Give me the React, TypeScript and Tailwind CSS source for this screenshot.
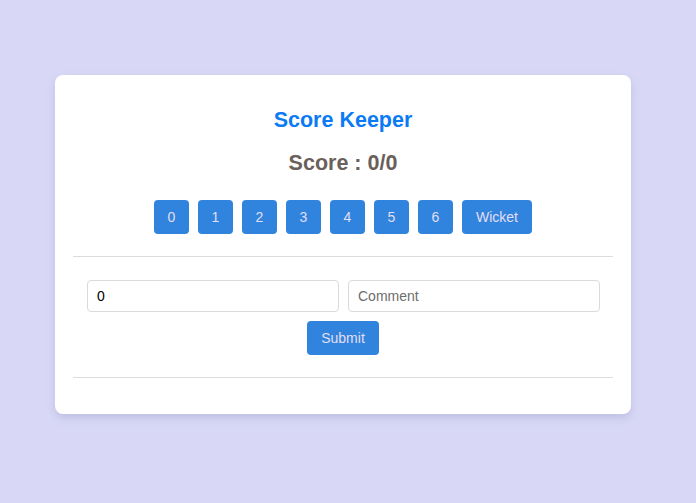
import React, { useState } from 'react';

const RUNS = ['0', '1', '2', '3', '4', '5', '6'];

export default function App() {
  const [runs, setRuns] = useState(0);
  const [wickets, setWickets] = useState(0);
  const [hit, setHit] = useState('0');
  const [comment, setComment] = useState('');

  const btn =
    'h-[34px] rounded-[4px] bg-[#3184dd] text-[14px] text-[#e2def4] leading-none flex items-center justify-center';

  return (
    <div
      className="min-h-[503px] w-full bg-[#d8d8f6] pt-[75px] pl-[55px]"
      style={{ fontFamily: '"Liberation Sans", Arial, sans-serif' }}
    >
      <div className="w-[576px] rounded-[8px] bg-white px-[18px] pt-[33px] pb-[36px] shadow-[0_4px_10px_rgba(80,80,140,0.18)]">
        <h1 className="text-center text-[21.5px] leading-[24px] font-bold text-[#0a7bf5]">Score Keeper</h1>
        <h2 className="mt-[18px] text-center text-[21.5px] leading-[26px] font-bold text-[#6a5f5a]">
          Score : {runs}/{wickets}
        </h2>
        <div className="mt-[24px] flex justify-center gap-[9px]">
          {RUNS.map((r) => (
            <button key={r} className={`${btn} w-[35px]`} onClick={() => setHit(r)}>
              {r}
            </button>
          ))}
          <button className={`${btn} w-[70px]`} onClick={() => setHit('W')}>
            Wicket
          </button>
        </div>
        <hr className="mt-[22px] border-t border-[#dcdcdc]" />
        <form
          className="pl-[14px] pr-[13px] pt-[23px] pb-[22px] flex flex-col items-center"
          onSubmit={(e) => {
            e.preventDefault();
            if (hit === 'W') setWickets(wickets + 1);
            else setRuns(runs + Number(hit));
          }}
        >
          <div className="flex w-full gap-[9px]">
            <input
              value={hit}
              onChange={(e) => setHit(e.target.value)}
              className="h-[32px] flex-1 min-w-0 rounded-[4px] border border-[#dadada] px-[9px] text-[14px] text-black outline-none"
            />
            <input
              value={comment}
              onChange={(e) => setComment(e.target.value)}
              placeholder="Comment"
              className="h-[32px] flex-1 min-w-0 rounded-[4px] border border-[#dadada] px-[9px] text-[14px] text-black placeholder:text-[#6d6d6d] outline-none"
            />
          </div>
          <button type="submit" className={`${btn} mt-[9px] mr-[1px] w-[72px]`}>
            Submit
          </button>
        </form>
        <hr className="border-t border-[#dcdcdc]" />
      </div>
    </div>
  );
}
